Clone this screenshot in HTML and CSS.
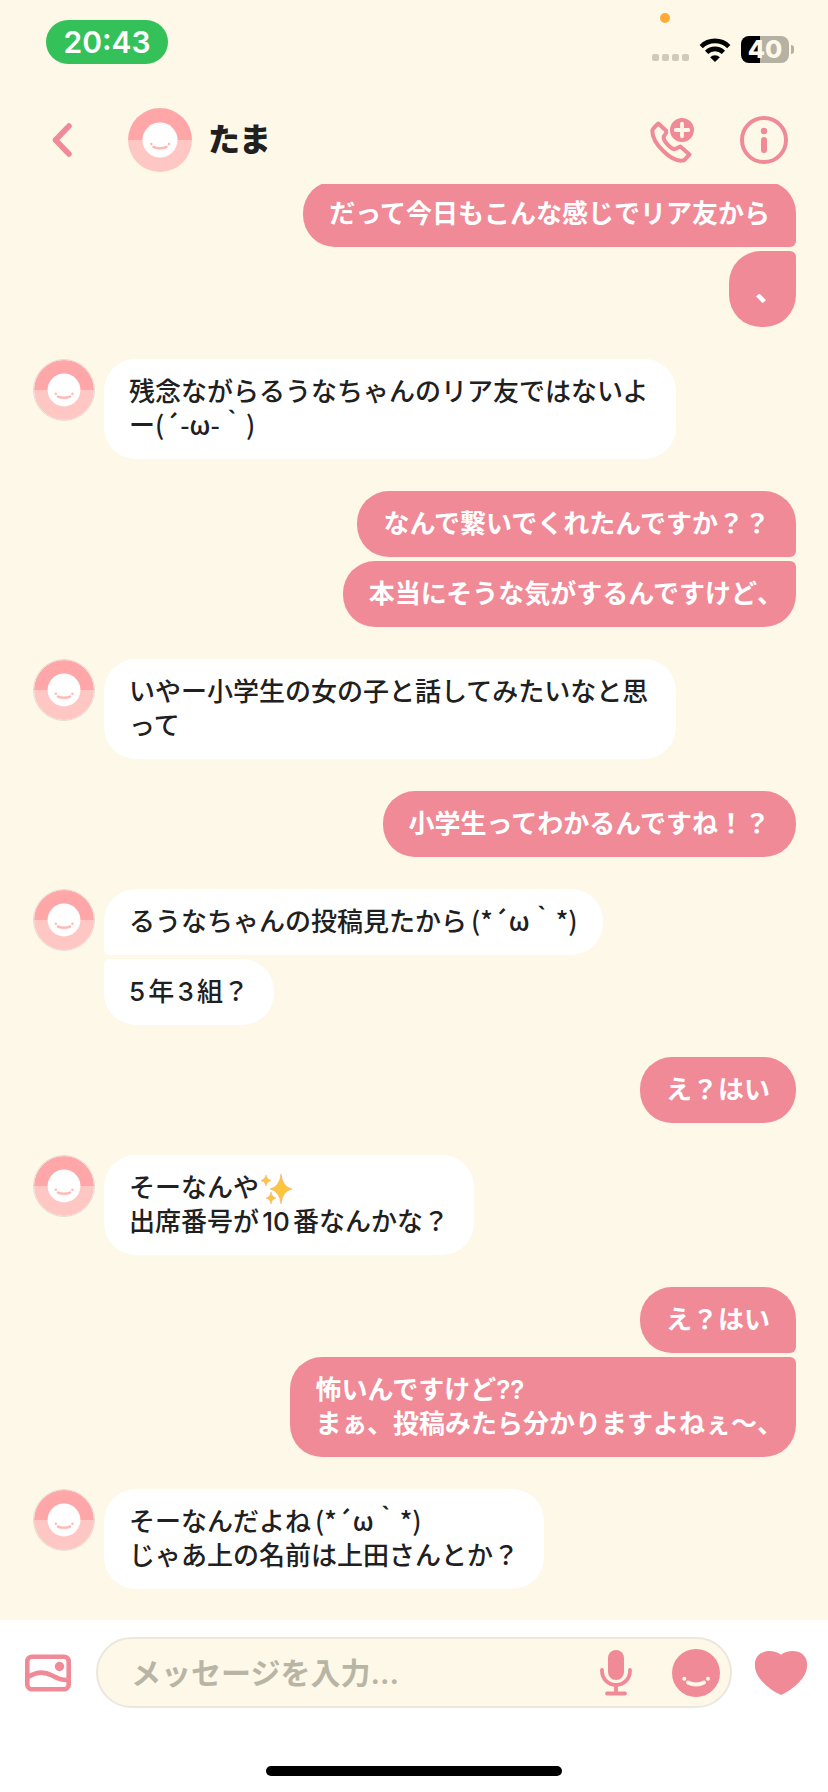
FILE: index.html
```html
<!DOCTYPE html>
<html lang="ja">
<head>
<meta charset="utf-8">
<meta name="viewport" content="width=device-width, initial-scale=1">
<title>たま</title>
<link rel="stylesheet" href="styles.css">
</head>
<body>
<svg class="defs" aria-hidden="true">
  <symbol id="avatar" viewBox="0 0 64 64">
    <path d="M0 32a32 32 0 0 1 64 0z" fill="#ffa7a8"/>
    <path d="M0 32a32 32 0 0 0 64 0z" fill="#ffc7c3"/>
    <circle cx="32" cy="32" r="17.5" fill="#fff"/>
    <path d="M25.500 39q6.500 2.600 13 0" fill="none" stroke="#ffb9b6" stroke-width="2.600" stroke-linecap="round"/>
    <circle cx="23.300" cy="36" r="1.300" fill="#ffb9b6"/>
    <circle cx="41" cy="36" r="1.300" fill="#ffb9b6"/>
  </symbol>
</svg>

<div class="status">
  <span class="clock">20:43</span>
  <div class="indicators">
    <i class="recording"></i>
    <span class="signal"><i></i><i></i><i></i><i></i></span>
    <svg class="wifi" viewBox="0 0 32 24" aria-label="Wi-Fi">
      <path d="M2.200 8.600a19.500 19.500 0 0 1 27.600 0M7.600 14.300a11.900 11.900 0 0 1 16.800 0" fill="none" stroke="#000" stroke-width="4.600"/>
      <path d="M16 24l-4.900-4.700a7 7 0 0 1 9.800 0z"/>
    </svg>
    <span class="battery"><span class="level">40</span><i class="nub"></i></span>
  </div>
</div>

<header class="header">
  <button class="icon-btn" aria-label="戻る">
    <svg width="20" height="36" viewBox="0 0 20 36"><path d="M17 4L3.500 18L17 32" fill="none" stroke="currentColor" stroke-width="5.500" stroke-linecap="round" stroke-linejoin="round"/></svg>
  </button>
  <svg class="avatar-lg" aria-hidden="true"><use href="#avatar"/></svg>
  <h1 class="name">たま</h1>
  <button class="icon-btn call" aria-label="通話">
    <svg width="44" height="48" viewBox="0 0 44 48">
      <path d="M8.300 7.500L17 15.500L13.800 20.500C12.600 24 19.500 32 24.500 33.300L30.300 30.500L39.500 38.500L34 44.300C22 47.500 2 27 2.300 14.500Q2.600 12.800 8.300 7.500Z" fill="none" stroke="currentColor" stroke-width="4" stroke-linejoin="round"/>
      <circle cx="32" cy="14" r="14" fill="#fef8e9"/>
      <circle cx="32" cy="14" r="12" fill="currentColor"/>
      <path d="M32 7.700v12.600M25.700 14h12.600" stroke="#fef8e9" stroke-width="3.800" stroke-linecap="round"/>
    </svg>
  </button>
  <button class="icon-btn" aria-label="情報">
    <svg width="48" height="48" viewBox="0 0 48 48">
      <circle cx="24" cy="24" r="22" fill="none" stroke="currentColor" stroke-width="4"/>
      <circle cx="24" cy="15" r="3.200" fill="currentColor"/>
      <path d="M24 24v10" stroke="currentColor" stroke-width="6" stroke-linecap="round"/>
    </svg>
  </button>
</header>

<main class="thread">
  <section class="group sent">
    <p class="bubble">だって今日もこんな感じでリア友から</p>
    <p class="bubble tall"><span class="half">、</span></p>
  </section>
  <section class="group received">
    <svg class="avatar" aria-hidden="true"><use href="#avatar"/></svg>
    <div class="stack"><p class="bubble">残念ながらるうなちゃんのリア友ではないよー<span class="face">(´-ω-｀)</span></p></div>
  </section>
  <section class="group sent">
    <p class="bubble">なんで繋いでくれたんですか？？</p>
    <p class="bubble">本当にそうな気がするんですけど<span class="half">、</span></p>
  </section>
  <section class="group received">
    <svg class="avatar" aria-hidden="true"><use href="#avatar"/></svg>
    <div class="stack"><p class="bubble">いやー小学生の女の子と話してみたいなと思って</p></div>
  </section>
  <section class="group sent">
    <p class="bubble">小学生ってわかるんですね！？</p>
  </section>
  <section class="group received">
    <svg class="avatar" aria-hidden="true"><use href="#avatar"/></svg>
    <div class="stack">
      <p class="bubble">るうなちゃんの投稿見たから<span class="face spaced">(*´ω｀*)</span></p>
      <p class="bubble">5年3組？</p>
    </div>
  </section>
  <section class="group sent">
    <p class="bubble">え？はい</p>
  </section>
  <section class="group received">
    <svg class="avatar" aria-hidden="true"><use href="#avatar"/></svg>
    <div class="stack">
      <p class="bubble">そーなんや<svg class="sparkles" viewBox="0 0 34 32" role="img" aria-label="✨"><g fill="#fcc53c" stroke="#f6b07a" stroke-width=".6"><path d="M22 1Q23.500 14 33 16Q23.500 18 22 31Q20.500 18 11 16Q20.500 14 22 1Z"/><path d="M7 2Q7.800 6.700 12 7.500Q7.800 8.300 7 13Q6.200 8.300 2 7.500Q6.200 6.700 7 2Z"/><path d="M12 19Q12.800 24.200 17 25Q12.800 25.800 12 31Q11.200 25.800 7 25Q11.200 24.200 12 19Z"/></g></svg><br>出席番号が10番なんかな？</p>
    </div>
  </section>
  <section class="group sent">
    <p class="bubble">え？はい</p>
    <p class="bubble">怖いんですけど??<br>まぁ、投稿みたら分かりますよねぇ〜<span class="half">、</span></p>
  </section>
  <section class="group received">
    <svg class="avatar" aria-hidden="true"><use href="#avatar"/></svg>
    <div class="stack"><p class="bubble">そーなんだよね<span class="face spaced">(*´ω｀*)</span><br>じゃあ上の名前は上田さんとか？</p></div>
  </section>
</main>

<footer class="footer">
  <form class="composer">
    <button type="button" class="icon-btn" aria-label="画像">
      <svg width="46" height="38" viewBox="0 0 46 38">
        <rect x="2.300" y="2.800" width="41.400" height="32.400" rx="4.500" fill="none" stroke="currentColor" stroke-width="4.600"/>
        <path d="M3 23C11 18 19 17 27 21.500Q36 26.500 43 26" fill="none" stroke="currentColor" stroke-width="4.600"/>
        <circle cx="34.500" cy="12.500" r="4.700" fill="currentColor"/>
      </svg>
    </button>
    <div class="field">
      <input class="text" type="text" placeholder="メッセージを入力..." aria-label="メッセージを入力">
      <button type="button" class="icon-btn" aria-label="音声">
        <svg width="32" height="46" viewBox="0 0 32 46">
          <rect x="8" y="0" width="16" height="30" rx="8" fill="currentColor"/>
          <path d="M2 20v1a14 14 0 0 0 28 0v-1M16 35v8M7 43.500h18" fill="none" stroke="currentColor" stroke-width="3.800" stroke-linecap="round"/>
        </svg>
      </button>
      <button type="button" class="icon-btn smile" aria-label="スタンプ">
        <svg width="48" height="48" viewBox="0 0 48 48">
          <circle cx="24" cy="24" r="24" fill="currentColor"/>
          <path d="M16 33.500q8 4 16 0" fill="none" stroke="#fef8e9" stroke-width="4" stroke-linecap="round"/>
          <circle cx="12.300" cy="29.700" r="2" fill="#fef8e9"/>
          <circle cx="36" cy="29.700" r="2" fill="#fef8e9"/>
        </svg>
      </button>
    </div>
    <button type="button" class="icon-btn" aria-label="いいね">
      <svg width="54" height="46" viewBox="0 0 54 46"><path d="M27 4.700C21 .2 12 0 6.500 3.500C-1 8.500-.500 20 5 27.500C10 34.500 19 41.500 27 45C35 41.500 44 34.500 49 27.500C54.500 20 55 8.500 47.500 3.500C42 0 33 .2 27 4.700Z" fill="currentColor"/></svg>
    </button>
  </form>
  <div class="home-bar"></div>
</footer>
</body>
</html>
```

FILE: styles.css
```css
* {
  box-sizing: border-box;
}

body {
  margin: 0;
  height: 100vh;
  display: flex;
  flex-direction: column;
  background: #fef8e9;
  color: #20201e;
  font-family: Inter, "Noto Sans CJK JP", sans-serif;
}

.defs {
  position: absolute;
  width: 0;
  height: 0;
}

.icon-btn {
  display: flex;
  flex: none;
  padding: 0;
  border: 0;
  background: none;
  color: #f08a97;
}

.status {
  display: flex;
  justify-content: space-between;
  align-items: flex-start;
  height: 84px;
  padding: 20px 34px 0 46px;
}

.clock {
  width: 122px;
  border-radius: 22px;
  background: #35c159;
  color: #fff;
  font-size: 30px;
  font-weight: 600;
  line-height: 44px;
  text-align: center;
}

.indicators {
  position: relative;
  display: flex;
  align-items: center;
  gap: 10px;
  padding-top: 16px;
}

.recording {
  position: absolute;
  left: 8px;
  top: -7px;
  width: 10px;
  height: 10px;
  border-radius: 50%;
  background: #feaa3a;
}

.signal {
  display: flex;
  gap: 3px;
  align-self: flex-end;
  margin-bottom: 2px;
}

.signal i {
  width: 7px;
  height: 7px;
  border-radius: 2px;
  background: #cfcabb;
}

.wifi {
  width: 32px;
  height: 24px;
}

.battery {
  display: flex;
  align-items: center;
  gap: 2px;
}

.level {
  width: 48px;
  border-radius: 8px;
  background: linear-gradient(90deg, #000 40%, #b5b1a3 40%);
  color: #fef8e9;
  font-size: 25px;
  font-weight: 800;
  line-height: 27px;
  text-align: center;
}

.nub {
  width: 3px;
  height: 9px;
  border-radius: 0 4px 4px 0;
  background: #b5b1a3;
}

.header {
  display: flex;
  align-items: center;
  flex: none;
  height: 100px;
  padding: 12px 40px 0 52px;
}

.avatar-lg {
  width: 64px;
  height: 64px;
  margin-left: 56px;
}

.name {
  flex: 1;
  margin: 0 0 0 16px;
  font-size: 32px;
  font-weight: 900;
  line-height: 40px;
}

.call {
  margin-right: 46px;
}

.thread {
  flex: 1;
  min-height: 0;
  overflow: hidden;
  display: flex;
  flex-direction: column;
  justify-content: flex-end;
  gap: 32px;
  padding: 0 32px 31px 33px;
  font-size: 26px;
  font-weight: 500;
  line-height: 34px;
  text-autospace: normal;
}

.group {
  display: flex;
  flex: none;
}

.sent {
  flex-direction: column;
  align-items: flex-end;
  gap: 4px;
}

.received {
  align-items: flex-start;
  gap: 9px;
}

.stack {
  display: flex;
  flex-direction: column;
  align-items: flex-start;
  gap: 4px;
  max-width: 75%;
}

.avatar {
  flex: none;
  width: 62px;
  height: 62px;
  border: 1px solid #e6ddd6;
  border-radius: 50%;
}

.bubble {
  margin: 0;
  padding: 16px 25px;
  border-radius: 32px;
}

.sent .bubble {
  padding: 16px 26px;
  background: #f08a97;
  color: #fff;
  font-weight: 600;
}

.received .bubble {
  background: #fff;
}

.sent .bubble:not(:last-child) {
  border-bottom-right-radius: 6px;
}

.sent .bubble:not(:first-child) {
  border-top-right-radius: 6px;
}

.stack .bubble:not(:last-child) {
  border-bottom-left-radius: 6px;
}

.stack .bubble:not(:first-child) {
  border-top-left-radius: 6px;
}

.tall {
  font-size: 30px;
  line-height: 44px;
}

.half {
  font-feature-settings: "halt";
}

.face {
  font-family: "Noto Sans CJK JP", sans-serif;
  line-height: 1;
}

.spaced {
  margin-left: 4px;
}

.sparkles {
  width: 34px;
  height: 32px;
  margin: -4px 0;
  vertical-align: -4px;
}

.footer {
  flex: none;
  display: flex;
  flex-direction: column;
  align-items: center;
  gap: 58px;
  padding: 17px 0 16px;
  background: #fff;
}

.composer {
  display: flex;
  align-items: center;
  align-self: stretch;
  padding: 0 20px 0 25px;
}

.field {
  flex: 1;
  min-width: 0;
  display: flex;
  align-items: center;
  height: 71px;
  margin: 0 22px 0 25px;
  padding: 0 10px 0 33px;
  border: 2px solid #ebe7db;
  border-radius: 36px;
  background: #fef8e9;
}

.text {
  flex: 1;
  min-width: 0;
  padding: 0;
  border: 0;
  outline: 0;
  background: none;
  color: #20201e;
  font: 600 30px/40px Inter, "Noto Sans CJK JP", sans-serif;
}

.text::placeholder {
  color: #b9b5a5;
  opacity: 1;
}

.smile {
  margin-left: 40px;
}

.home-bar {
  width: 296px;
  height: 10px;
  border-radius: 5px;
  background: #000;
}
```
